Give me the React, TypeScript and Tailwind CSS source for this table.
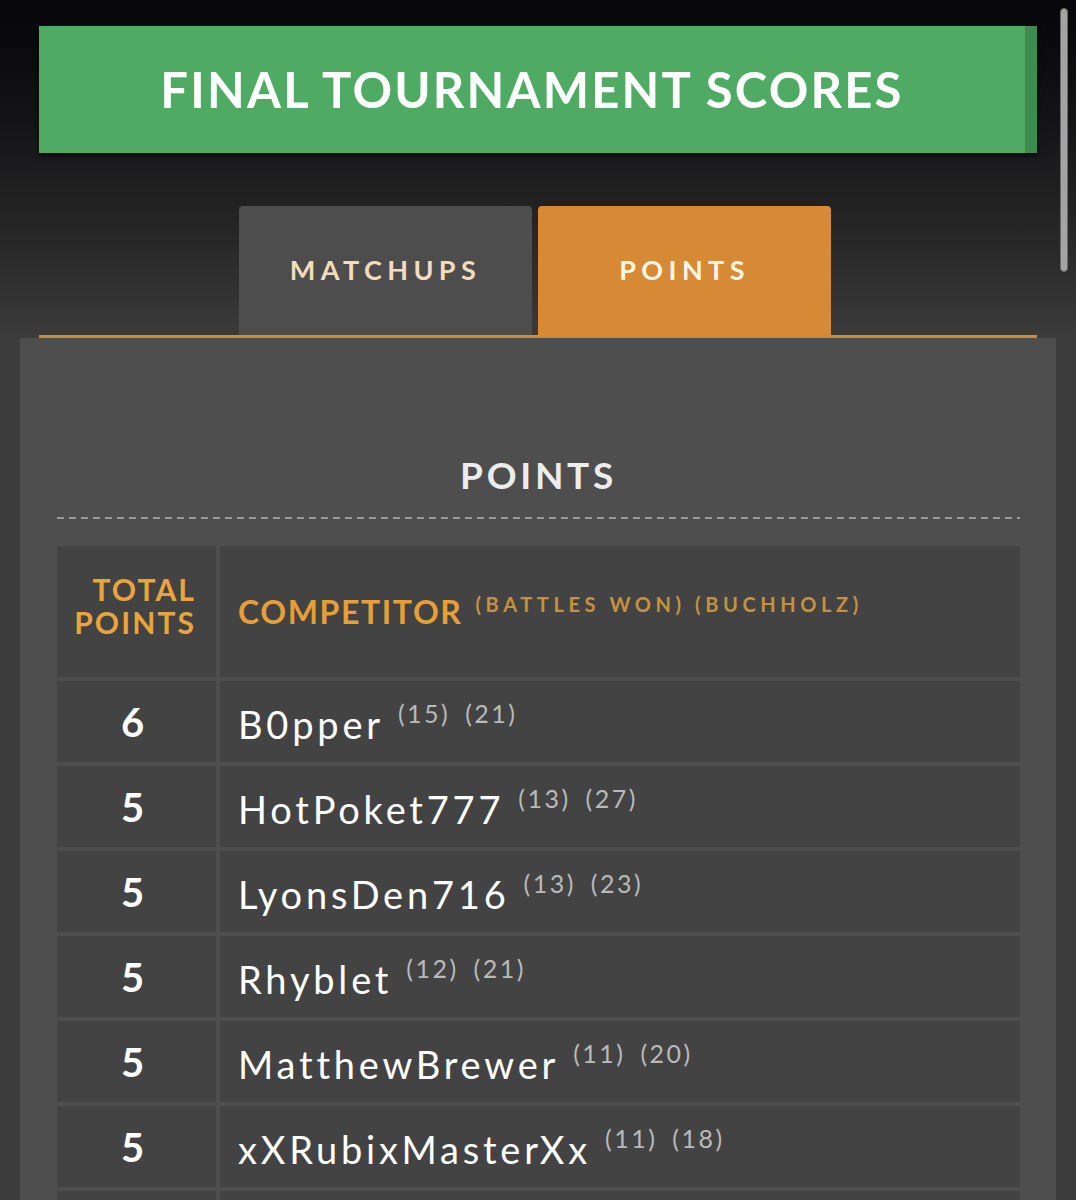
import React from "react";

const rows = [
  { pts: "6", name: "B0pper", extra: "(15) (21)" },
  { pts: "5", name: "HotPoket777", extra: "(13) (27)" },
  { pts: "5", name: "LyonsDen716", extra: "(13) (23)" },
  { pts: "5", name: "Rhyblet", extra: "(12) (21)" },
  { pts: "5", name: "MatthewBrewer", extra: "(11) (20)" },
  { pts: "5", name: "xXRubixMasterXx", extra: "(11) (18)" },
];

export default function App() {
  return (
    <div
      className="relative min-h-[1200px] overflow-hidden bg-[#3c3c3c] bg-[linear-gradient(180deg,#05050a_0px,#141416_120px,#262627_230px,#333334_300px,#3c3c3c_340px)] px-[20px] pt-[26px]"
      style={{ fontFamily: "Lato, 'Open Sans', sans-serif" }}
    >
      {/* Banner */}
      <div className="mx-[19px] flex h-[127px] items-center justify-center border-r-[12px] border-[#3e8a4f] bg-[#4fab63] shadow-[0_3px_4px_rgba(0,0,0,0.7)]">
        <h1 className="text-[49px] font-bold leading-none tracking-[0.045em] text-white">
          FINAL TOURNAMENT SCORES
        </h1>
      </div>

      {/* Tabs */}
      <div className="mx-[19px] mt-[53px] flex gap-[6px] border-b-[3px] border-[#d68a35] pl-[200px]">
        <div className="flex h-[129px] w-[293px] items-center justify-center rounded-t-[4px] bg-[#4d4d4d]">
          <span className="text-[27px] font-bold tracking-[0.2em] text-[#f2dcbd]">MATCHUPS</span>
        </div>
        <div className="flex h-[129px] w-[293px] items-center justify-center rounded-t-[4px] bg-[#d68a35]">
          <span className="text-[27px] font-bold tracking-[0.2em] text-[#fff4e4]">POINTS</span>
        </div>
      </div>

      {/* Panel */}
      <div className="bg-[#4e4e4e] pl-[37px] pr-[36px] pt-[114px]">
        <h2 className="text-center text-[37px] font-bold leading-[46px] tracking-[0.1em] text-[#ececec]">
          POINTS
        </h2>
        <div className="mt-[19px] h-[2px] bg-[repeating-linear-gradient(90deg,#9a9a9a_0px,#9a9a9a_7px,transparent_7px,transparent_12px)]" />

        <div className="mt-[27px] grid grid-cols-[159px_1fr] gap-[4px]">
          {/* Header */}
          <div className="flex h-[131px] items-center justify-end bg-[#434343] pb-[12px] pr-[20px]">
            <div className="text-right text-[30px] font-bold leading-[33px] tracking-[0.07em] text-[#eaa43c]">
              <div>TOTAL</div>
              <div>POINTS</div>
            </div>
          </div>
          <div className="flex h-[131px] items-center bg-[#434343] pl-[18px]">
            <div className="whitespace-nowrap">
              <span className="text-[32px] font-bold tracking-[0.05em] text-[#e59f36]">COMPETITOR</span>
              <span className="ml-[13px] align-[12px] text-[20px] font-bold tracking-[0.23em] text-[#c4923f]">
                (BATTLES WON) (BUCHHOLZ)
              </span>
            </div>
          </div>

          {rows.map((r, i) => (
            <React.Fragment key={i}>
              <div className="flex h-[81px] items-center justify-center bg-[#434343] pr-[8px]">
                <span className="text-[40px] font-bold leading-none text-white">{r.pts}</span>
              </div>
              <div className="flex h-[81px] items-center bg-[#434343] pb-[3px] pl-[18px]">
                <div className="whitespace-nowrap">
                  <span className="text-[38px] leading-none tracking-[0.1em] text-white">{r.name}</span>
                  <span className="ml-[14px] align-[16px] text-[25px] tracking-[0.1em] text-[#b9b9b9] [word-spacing:6px]">
                    {r.extra}
                  </span>
                </div>
              </div>
            </React.Fragment>
          ))}
          <div className="h-[81px] bg-[#434343]" />
          <div className="h-[81px] bg-[#434343]" />
        </div>
      </div>

      {/* Overlay scrollbar */}
      <div className="absolute left-[1060px] top-[8px] h-[264px] w-[8px] rounded-full border border-[#6a6a6a] bg-[#a3a3a3]" />
    </div>
  );
}
